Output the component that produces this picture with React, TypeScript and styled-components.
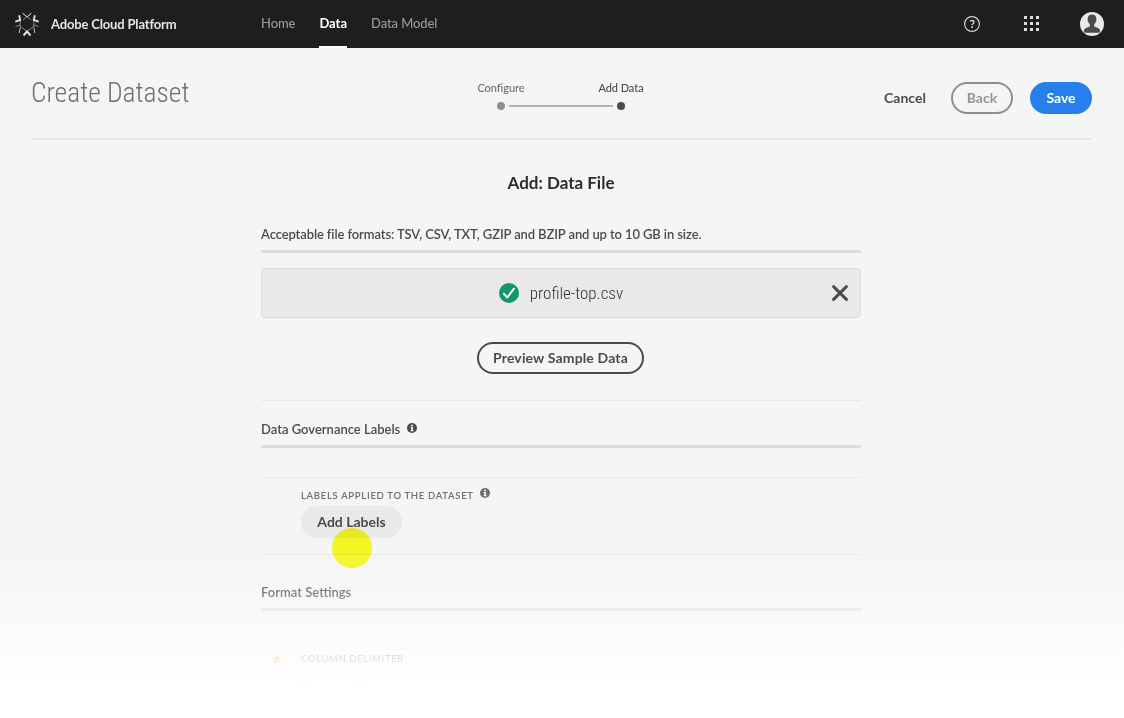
import React from 'react';
import styled, { createGlobalStyle } from 'styled-components';

const GlobalStyle = createGlobalStyle`
  *, *::before, *::after { box-sizing: border-box; }
  body {
    margin: 0;
    background: #fff;
    font-family: Lato, "Open Sans", sans-serif;
    font-size: 13px;
    color: #4b4b4b;
    overflow: hidden;
  }
  button { font-family: inherit; margin: 0; cursor: pointer; }
`;

const Page = styled.div`
  position: relative;
  width: 1124px;
  height: 718px;
  background: #f5f5f5;
  overflow: hidden;
`;

const TopBar = styled.header`
  display: flex;
  align-items: center;
  justify-content: space-between;
  height: 48px;
  padding: 0 20px 0 14px;
  background: #1e1e1e;
`;

const Brand = styled.div`
  display: flex;
  align-items: center;
  gap: 11px;
  width: 247px;
  color: #e6e6e6;
  font-weight: 700;
  letter-spacing: -0.16px;
  white-space: nowrap;
`;

const Nav = styled.nav`
  display: flex;
  flex: 1;
  gap: 24px;
  height: 48px;
`;

const NavItem = styled.a<{ $active?: boolean }>`
  height: 48px;
  line-height: 46px;
  letter-spacing: ${(p) => (p.$active ? '0' : '-0.1px')};
  color: ${(p) => (p.$active ? '#fff' : '#999')};
  font-weight: ${(p) => (p.$active ? 700 : 500)};
  border-bottom: 2px solid ${(p) => (p.$active ? '#fff' : 'transparent')};
`;

const Tools = styled.div`
  display: flex;
  align-items: center;
  gap: 42px;
`;

const PageHead = styled.section`
  display: grid;
  grid-template-columns: 1fr 240px 1fr;
  height: 92px;
  margin: 0 33px 0 31px;
  border-bottom: 2px solid #e9e9e9;
`;

const Title = styled.h1`
  margin: 29px 0 0;
  font-family: Roboto, sans-serif;
  font-stretch: 75%;
  font-size: 27.5px;
  line-height: 32px;
  font-weight: 300;
  color: #6e6e6e;
`;

const Steps = styled.div`
  display: flex;
  flex-direction: column;
  padding-top: 33px;
`;

const StepLabels = styled.div`
  display: grid;
  grid-template-columns: 1fr 1fr;
  text-align: center;
  font-size: 11px;
  line-height: 14px;
`;

const StepLabel = styled.span<{ $current?: boolean }>`
  color: ${(p) => (p.$current ? '#4b4b4b' : '#6e6e6e')};
  font-weight: 500;
  letter-spacing: -0.05px;
`;

const StepTrack = styled.div`
  display: flex;
  align-items: center;
  gap: 4px;
  margin: 7px 56px 0;
`;

const StepDot = styled.i<{ $current?: boolean }>`
  width: 8px;
  height: 8px;
  border-radius: 50%;
  background: ${(p) => (p.$current ? '#4b4b4b' : '#8e8e8e')};
`;

const StepLine = styled.i`
  flex: 1;
  height: 2px;
  background: #b3b3b3;
`;

const Actions = styled.div`
  display: flex;
  justify-content: flex-end;
  align-items: flex-start;
  padding-top: 34px;
  margin-right: -1px;
`;

type Variant = 'quiet' | 'outline' | 'disabled' | 'primary' | 'subtle';

const variants: Record<Variant, string> = {
  quiet: 'color:#4b4b4b;background:transparent;border-color:transparent;',
  outline: 'color:#4b4b4b;background:transparent;border-color:#4b4b4b;',
  disabled: 'color:#959595;background:transparent;border-color:#8e8e8e;',
  primary: 'color:#fff;background:#2680eb;border-color:#2680eb;',
  subtle: 'color:#4b4b4b;background:#e9e9e9;border-color:#e9e9e9;',
};

const Button = styled.button<{ $variant: Variant; $width: number; $gap?: number }>`
  width: ${(p) => p.$width}px;
  height: 32px;
  padding: 0;
  margin-left: ${(p) => p.$gap ?? 0}px;
  border: 2px solid;
  border-radius: 16px;
  font-size: 14px;
  line-height: 28px;
  font-weight: 700;
  white-space: nowrap;
  ${(p) => variants[p.$variant]}
`;

const Main = styled.main`
  display: flex;
  flex-direction: column;
  width: 600px;
  margin-left: 261px;
`;

const Heading = styled.h2`
  margin: 31px 0 0;
  height: 24px;
  line-height: 24px;
  font-size: 17px;
  font-weight: 700;
  color: #2c2c2c;
  text-align: center;
`;

const SectionTitle = styled.h3<{ $top: number }>`
  display: flex;
  align-items: flex-start;
  gap: 7px;
  margin: ${(p) => p.$top}px 0 0;
  height: 31px;
  line-height: 24px;
  font-size: 13px;
  font-weight: 600;
  border-bottom: 3px solid #dcdcdc;

  svg { margin-top: 6px; }
`;

const TightText = styled.span`
  letter-spacing: -0.11px;
`;

const FileBox = styled.div`
  display: grid;
  grid-template-columns: 1fr auto 1fr;
  align-items: center;
  height: 50px;
  margin-top: 15px;
  padding: 0 12px;
  border: 1px solid #dcdcdc;
  border-radius: 4px;
  background: #e9e9e9;
`;

const FileName = styled.div`
  display: flex;
  grid-column: 2;
  align-items: center;
  gap: 11px;
  font-family: Roboto, sans-serif;
  font-stretch: 75%;
  font-size: 17px;
  line-height: 20px;
  font-weight: 300;
  color: #323232;
`;

const Remove = styled.button`
  justify-self: end;
  display: flex;
  padding: 0;
  border: 0;
  background: none;
`;

const PreviewRow = styled.div`
  display: flex;
  justify-content: center;
  padding: 24px 1px 26px 0;

  button { letter-spacing: 0.15px; }
`;

const Hairline = styled.hr<{ $top?: number }>`
  width: 600px;
  height: 1px;
  margin: ${(p) => p.$top ?? 0}px 0 0;
  border: 0;
  background: #e8e8e8;
`;

const Field = styled.div`
  display: flex;
  flex-direction: column;
  align-items: flex-start;
  height: 76px;
  padding: 10px 0 0 40px;
`;

const Caption = styled.div<{ $tracking: number }>`
  display: flex;
  align-items: center;
  gap: 6px;
  height: 16px;
  margin-bottom: 2px;
  font-size: 9.5px;
  font-weight: 600;
  letter-spacing: ${(p) => p.$tracking}px;
  line-height: 16px;
  color: #6e6e6e;

  svg { margin-top: -6px; }
`;

const DelimiterField = styled.div`
  display: grid;
  grid-template-columns: 29px 1fr auto;
  align-items: center;
  row-gap: 6px;
  padding: 10px 40px 0 11px;
`;

const Required = styled.span`
  font-family: "Open Sans", sans-serif;
  font-size: 18px;
  font-weight: 600;
  height: 18px;
  line-height: 23px;
  color: #e68619;
`;

const Choice = styled.span`
  grid-column: 2;
  font-size: 14px;
  line-height: 20px;
`;

const Fade = styled.div`
  position: absolute;
  left: 0;
  right: 0;
  top: 553px;
  bottom: 0;
  background: linear-gradient(rgba(255, 255, 255, 0) 0, #fff 131px);
`;

const ClickMarker = styled.div`
  position: absolute;
  left: 332px;
  top: 528px;
  width: 40px;
  height: 40px;
  border-radius: 50%;
  background: #fdff26;
  mix-blend-mode: multiply;
`;

const Logo = () => (
  <svg width="26" height="26" viewBox="0 0 26 26" fill="none" stroke="#dedede">
    <path d="M8.5 2 17 9M17.5 2 9 9M6.200 8.500v9.500M19.800 8.500v9.500M1.500 15.500 6.500 14M24.500 15.500 19.500 14M7 16l8.500 6M19 16l-8.500 6" strokeWidth="0.9" opacity="0.6" />
    <path d="M9 2.500l4 3.600 4-3.600M6 17.500 5.200 22M20 17.500l.8 4.500" strokeWidth="1" opacity="0.85" />
    <path d="M5.200 4.200 6.200 9 1.300 10.600M20.800 4.200 19.800 9l4.900 1.600M9.500 24.500l3.500-4 3.500 4" strokeWidth="1.900" />
  </svg>
);

const HelpIcon = () => (
  <svg width="18" height="18" viewBox="0 0 18 18" fill="none" stroke="#d0d0d0">
    <circle cx="9" cy="9" r="7.400" strokeWidth="1.200" />
    <path d="M7 6.300C7.400 5.700 8.200 5.400 9 5.400c1.200 0 2 .7 2 1.700 0 1.400-1.900 1.500-1.900 3.200" strokeWidth="1.500" />
    <circle cx="9.100" cy="12.300" r="1" fill="#d0d0d0" stroke="none" />
  </svg>
);

const AppsIcon = () => (
  <svg width="15" height="16" viewBox="0 0 15 16" fill="#dcdcdc">
    {[0, 6, 12].map((y) => [0, 6, 12].map((x) => <rect key={`${x}-${y}`} x={x} y={y} width="3" height="3" />))}
  </svg>
);

const AppsButton = styled.div`
  display: flex;
  margin: 0 -1px 0 1px;
`;

const Avatar = () => (
  <svg width="24" height="24" viewBox="0 0 24 24">
    <circle cx="12" cy="12" r="12" fill="#e8e8e8" />
    <path d="M12 2.600c2.900 0 4.400 1.900 4.400 4.500 0 2.300-.9 4.200-2.200 5.300v1.900c0 .9 5.300 1.200 5.900 4.100.2 1-.3 1.900-1.100 2.300H5c-.8-.4-1.300-1.300-1.100-2.300.6-2.900 5.900-3.200 5.900-4.100v-1.900C8.500 11.300 7.600 9.400 7.600 7.100c0-2.600 1.500-4.500 4.400-4.500z" fill="#4b4b4b" />
  </svg>
);

const CheckIcon = () => (
  <svg width="20" height="20" viewBox="0 0 20 20" fill="none">
    <circle cx="10" cy="10" r="10" fill="#12976c" />
    <path d="M5 10.800l3.300 3.700L14.900 5.700" stroke="#fff" strokeWidth="2" strokeLinecap="round" strokeLinejoin="round" />
  </svg>
);

const CrossIcon = () => (
  <svg width="16" height="16" viewBox="0 0 16 16" stroke="#4b4b4b" strokeWidth="2.900" strokeLinecap="round">
    <path d="M1.600 1.600l12.800 12.800M14.400 1.600L1.600 14.400" />
  </svg>
);

const InfoIcon = ({ color }: { color: string }) => (
  <svg width="10" height="10" viewBox="0 0 10 10">
    <circle cx="5" cy="5" r="5" fill={color} />
    <path d="M4 1.700h2v1.500H4zM3.500 4.100H6v3.100h.7v1H3.400v-1h.8V5.100h-.7z" fill="#f4f4f4" />
  </svg>
);

export default function App() {
  return (
    <Page>
      <GlobalStyle />
      <TopBar>
        <Brand>
          <Logo />
          Adobe Cloud Platform
        </Brand>
        <Nav>
          <NavItem>Home</NavItem>
          <NavItem $active>Data</NavItem>
          <NavItem>Data Model</NavItem>
        </Nav>
        <Tools>
          <HelpIcon />
          <AppsButton>
            <AppsIcon />
          </AppsButton>
          <Avatar />
        </Tools>
      </TopBar>

      <PageHead>
        <Title>Create Dataset</Title>
        <Steps>
          <StepLabels>
            <StepLabel>Configure</StepLabel>
            <StepLabel $current>Add Data</StepLabel>
          </StepLabels>
          <StepTrack>
            <StepDot />
            <StepLine />
            <StepDot $current />
          </StepTrack>
        </Steps>
        <Actions>
          <Button $variant="quiet" $width={60}>Cancel</Button>
          <Button $variant="disabled" $width={62} $gap={16}>Back</Button>
          <Button $variant="primary" $width={62} $gap={17}>Save</Button>
        </Actions>
      </PageHead>

      <Main>
        <Heading>Add: Data File</Heading>
        <SectionTitle $top={27}>
          <TightText>
            Acceptable file formats: TSV, CSV, TXT, GZIP and BZIP and up to 10 GB in size.
          </TightText>
        </SectionTitle>
        <FileBox>
          <FileName>
            <CheckIcon />
            profile-top.csv
          </FileName>
          <Remove aria-label="Remove file">
            <CrossIcon />
          </Remove>
        </FileBox>
        <PreviewRow>
          <Button $variant="outline" $width={167}>Preview Sample Data</Button>
        </PreviewRow>
        <Hairline />

        <SectionTitle $top={16}>
          Data Governance Labels
          <InfoIcon color="#4b4b4b" />
        </SectionTitle>
        <Hairline $top={29} />
        <Field>
          <Caption $tracking={0.7}>
            LABELS APPLIED TO THE DATASET
            <InfoIcon color="#6e6e6e" />
          </Caption>
          <Button $variant="subtle" $width={101}>Add Labels</Button>
        </Field>
        <Hairline />

        <SectionTitle $top={25}>Format Settings</SectionTitle>
        <Hairline $top={29} />
        <DelimiterField>
          <Required>*</Required>
          <Caption $tracking={0.6}>COLUMN DELIMITER</Caption>
          <Choice>Comma (,)</Choice>
        </DelimiterField>
      </Main>

      <ClickMarker />
      <Fade />
    </Page>
  );
}
